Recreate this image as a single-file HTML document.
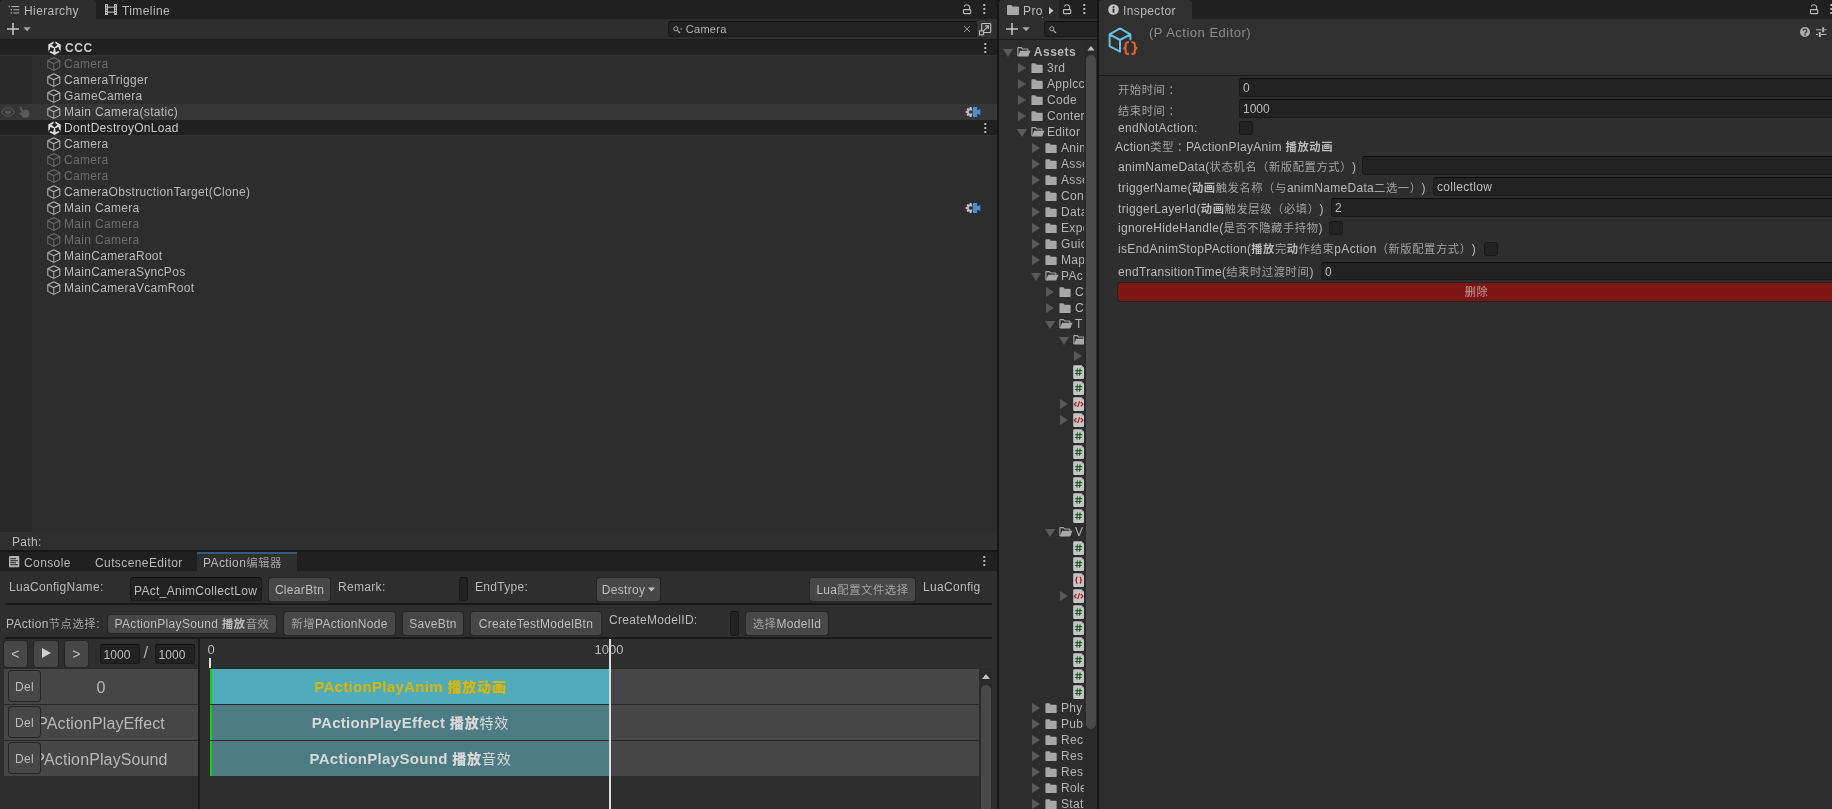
<!DOCTYPE html><html><head><meta charset="utf-8"><title>Unity</title><style>
*{box-sizing:border-box;margin:0;padding:0}
html,body{width:1832px;height:809px;overflow:hidden;background:#171717}
body{position:relative;font-family:"Liberation Sans","Noto Sans CJK SC",sans-serif;font-size:12px;color:#bababa;letter-spacing:.32px;line-height:16px;-webkit-font-smoothing:antialiased}
.a{position:absolute}
.t{position:absolute;white-space:nowrap}
.pane{position:absolute;overflow:hidden;background:#2d2d2d;will-change:transform;border-radius:3px 3px 0 0}
.tabbar{position:absolute;left:0;top:0;right:0;height:19px;background:#202020}
.tab{position:absolute;top:0;height:19px;background:#2e2e2e;border-radius:3px 3px 0 0}
.row{position:absolute;left:0;right:0;height:16px}
.dim{color:#6e6e6e}
.fld{position:absolute;background:#222;border:1px solid #1a1a1a;border-top-color:#0e0e0e;border-radius:3px;color:#bebebe;white-space:nowrap;overflow:hidden}
.btn{position:absolute;background:#474747;box-shadow:0 0 0 1px #262626;border-radius:3px;color:#bebebe;text-align:center;white-space:nowrap;overflow:hidden}
.cb{position:absolute;width:14px;height:14px;background:#222;border:1px solid #181818;border-radius:3px}
.b{font-weight:bold}
.c{color:#a2a2a2;font-size:.942em;letter-spacing:.051em;text-spacing-trim:space-all}
b{font-size:.942em;letter-spacing:.051em}
.nc .c{color:inherit;font-weight:normal}
svg{position:absolute;overflow:visible}
</style></head><body><svg width="0" height="0" style="left:0;top:0"><defs><clipPath id="gc"><rect x="0" y="0" width="7.100" height="10"/></clipPath></defs></svg><div class="pane" style="left:0;top:0;width:997px;height:550px"><div class="tabbar"></div><div class="tab" style="left:0;width:96px"></div><svg style="left:8px;top:5px" width="12" height="10" viewBox="0 0 12 10" fill="#a8a8a8"><rect x=".6" y=".8" width="1.400" height="1.400"/><rect x="3.400" y="1" width="7.800" height="1.100"/><rect x="2.600" y="4" width="1.400" height="1.400"/><rect x="5.400" y="4.200" width="5.800" height="1.100"/><rect x="2.600" y="7.200" width="1.400" height="1.400"/><rect x="5.400" y="7.400" width="5.800" height="1.100"/></svg><div class="t" style="left:24px;top:3px;letter-spacing:.4px">Hierarchy</div><svg style="left:105px;top:4px" width="12" height="11" viewBox="0 0 12 11"><rect x="0" y="0" width="3" height="11" rx=".6" fill="#bcbcbc"/><rect x="9" y="0" width="3" height="11" rx=".6" fill="#bcbcbc"/><rect x="3" y="2.600" width="6" height="1.100" fill="#bcbcbc"/><rect x="3" y="7.600" width="6" height="1.100" fill="#bcbcbc"/><path d="M1.500 1.200v9M10.500 1.200v9" stroke="#2a2a2a" stroke-width=".9" stroke-dasharray="1 1.300"/></svg><div class="t" style="left:122px;top:3px;letter-spacing:.4px">Timeline</div><svg style="left:962px;top:4px" width="10" height="11" viewBox="0 0 10 11" fill="none" stroke="#bcbcbc" stroke-width="1.100"><rect x="1.500" y="5.600" width="7.200" height="4" rx=".6"/><path d="M2.300 2.600A2.700 2.400 0 0 1 7.600 2.700V5.500"/></svg><svg style="left:982.7px;top:4px" width="3" height="11" viewBox="0 0 3 11" fill="#b6b6b6"><rect x=".3" y="0" width="2" height="2"/><rect x=".3" y="4" width="2" height="2"/><rect x=".3" y="8" width="2" height="2"/></svg><div class="a" style="left:0;top:19px;width:997px;height:21px;background:#2e2e2e;border-bottom:1px solid #1c1c1c"></div><svg style="left:7px;top:23px" width="24" height="12" viewBox="0 0 24 12"><path d="M6 0v12M0 6h12" stroke="#c4c4c4" stroke-width="1.6"/><path d="M16.4 4.2h7.4L20.1 8.200z" fill="#a8a8a8"/></svg><div class="fld" style="left:668px;top:21px;width:309px;height:16px;line-height:15px;padding-left:16.700px;font-size:11px;color:#b4b4b4;border-radius:3px 0 0 3px">Camera</div><svg style="left:673px;top:25.500px" width="11" height="8" viewBox="0 0 11 8" fill="none" stroke="#a6a6a6"><circle cx="2.800" cy="2.800" r="2.100" stroke-width="1"/><path d="M4.400 4.400 7 7" stroke-width="1.100"/><path d="M6.800 2.400h2.600L8.100 4z" fill="#a6a6a6" stroke="none"/></svg><svg style="left:964px;top:26px" width="6" height="6" viewBox="0 0 6 6" stroke="#a4a4a4" stroke-width=".9"><path d="M0 0l6 6M6 0l-6 6"/></svg><div class="a" style="left:977px;top:21px;width:16px;height:16px;background:#333;border-radius:0 3px 3px 0"></div><svg style="left:978px;top:22px" width="14" height="14" viewBox="0 0 14 14" fill="none" stroke="#bcbcbc" stroke-width="1.100"><rect x="3.700" y="1.500" width="9" height="9" rx=".8"/><rect x="1.500" y="8.800" width="4" height="4" fill="#333"/><path d="M5.500 8.800 10 4.300M7.200 3.900h3.200v3.200"/></svg><div class="a" style="left:0;top:40px;width:32px;height:492px;background:#272727"></div><div class="row" style="top:40px;background:#202020;height:15px"></div><div class="row" style="top:55px;height:1px;background:#333"></div><svg style="left:47.6px;top:40.7px" width="13" height="14" viewBox="0 0 13 14"><path d="M6.500 0 12.700 3.500v7L6.500 14 .3 10.500v-7z" fill="#dedede"/><path d="M5.650.1h1.700v2.200l2.200 1.400L6.500 6.400 3.450 3.700l2.200-1.400z" fill="#212121"/><g transform="rotate(120 6.500 7)"><path d="M5.650.1h1.700v2.200l2.200 1.400L6.500 6.400 3.450 3.700l2.200-1.400z" fill="#212121"/></g><g transform="rotate(240 6.500 7)"><path d="M5.650.1h1.700v2.200l2.200 1.400L6.500 6.400 3.450 3.700l2.200-1.400z" fill="#212121"/></g></svg><div class="t b" style="left:65px;top:40px;color:#cacaca;letter-spacing:.6px">CCC</div><svg style="left:984px;top:43px" width="3" height="11" viewBox="0 0 3 11" fill="#b6b6b6"><rect x=".3" y="0" width="2" height="2"/><rect x=".3" y="4" width="2" height="2"/><rect x=".3" y="8" width="2" height="2"/></svg><svg style="left:47px;top:57px" width="13.600" height="14.200" viewBox="0 0 14 15" preserveAspectRatio="none" fill="none" stroke="#6c6c6c" stroke-width="1.050" stroke-linejoin="round"><path d="M7 .8 13.200 4v7L7 14.200.8 11V4z"/><path d="M.8 4 7 7.200 13.200 4M7 7.200v7"/></svg><div class="t dim" style="left:64px;top:56px">Camera</div><svg style="left:47px;top:73px" width="13.600" height="14.200" viewBox="0 0 14 15" preserveAspectRatio="none" fill="none" stroke="#b4b4b4" stroke-width="1.050" stroke-linejoin="round"><path d="M7 .8 13.200 4v7L7 14.200.8 11V4z"/><path d="M.8 4 7 7.200 13.200 4M7 7.200v7"/></svg><div class="t" style="left:64px;top:72px">CameraTrigger</div><svg style="left:47px;top:89px" width="13.600" height="14.200" viewBox="0 0 14 15" preserveAspectRatio="none" fill="none" stroke="#b4b4b4" stroke-width="1.050" stroke-linejoin="round"><path d="M7 .8 13.200 4v7L7 14.200.8 11V4z"/><path d="M.8 4 7 7.200 13.200 4M7 7.200v7"/></svg><div class="t" style="left:64px;top:88px">GameCamera</div><div class="row" style="top:104px;background:#363636"></div><svg style="left:1px;top:107px" width="14" height="10" viewBox="0 0 14 10" fill="none" stroke="#555" stroke-width="1.100"><path d="M.6 5C2.200 2 4.500.8 7 .8S11.800 2 13.400 5C11.800 8 9.500 9.200 7 9.200S2.200 8 .6 5z"/><path d="M4.600 4.200A2.400 2.600 0 0 0 9.400 4.200z" fill="#555"/></svg><svg style="left:18px;top:106px" width="12" height="12" viewBox="0 0 12 12" fill="#5a5a5a"><path d="M1.500.8 3 .5 5 4.200 8.500 3.500l2.500 1.200.6 3.600L9.800 11.500H5.200L1.200 7.200l1-.9L4 7.500z"/></svg><svg style="left:965px;top:107px" width="16" height="10" viewBox="0 0 16 10"><g clip-path="url(#gc)"><circle cx="5.600" cy="5" r="3.700" fill="#bcbcbc"/><path d="M8.10 5.00L10.50 5.00M7.37 6.77L9.06 8.46M5.60 7.50L5.60 9.90M3.83 6.77L2.14 8.46M3.10 5.00L0.70 5.00M3.83 3.23L2.14 1.54M5.60 2.50L5.60 0.10M7.37 3.23L9.06 1.54" stroke="#bcbcbc" stroke-width="2"/><circle cx="5.600" cy="5" r="1.800" fill="#363636"/></g><path d="M7.900 0h4.200v3.400l3.200-1.600v6.400l-3.200-1.600V10H7.900z" fill="#4a8fd6"/></svg><svg style="left:47px;top:105px" width="13.600" height="14.200" viewBox="0 0 14 15" preserveAspectRatio="none" fill="none" stroke="#b4b4b4" stroke-width="1.050" stroke-linejoin="round"><path d="M7 .8 13.200 4v7L7 14.200.8 11V4z"/><path d="M.8 4 7 7.200 13.200 4M7 7.200v7"/></svg><div class="t" style="left:64px;top:104px">Main Camera(static)</div><div class="row" style="top:120px;background:#202020;height:15px"></div><div class="row" style="top:135px;height:1px;background:#333"></div><svg style="left:47.6px;top:120.7px" width="13" height="14" viewBox="0 0 13 14"><path d="M6.500 0 12.700 3.500v7L6.500 14 .3 10.500v-7z" fill="#dedede"/><path d="M5.650.1h1.700v2.200l2.200 1.400L6.500 6.400 3.450 3.700l2.200-1.400z" fill="#212121"/><g transform="rotate(120 6.500 7)"><path d="M5.650.1h1.700v2.200l2.200 1.400L6.500 6.400 3.450 3.700l2.200-1.400z" fill="#212121"/></g><g transform="rotate(240 6.500 7)"><path d="M5.650.1h1.700v2.200l2.200 1.400L6.500 6.400 3.450 3.700l2.200-1.400z" fill="#212121"/></g></svg><div class="t" style="left:64px;top:120px;color:#cacaca">DontDestroyOnLoad</div><svg style="left:984px;top:123px" width="3" height="11" viewBox="0 0 3 11" fill="#b6b6b6"><rect x=".3" y="0" width="2" height="2"/><rect x=".3" y="4" width="2" height="2"/><rect x=".3" y="8" width="2" height="2"/></svg><svg style="left:47px;top:137px" width="13.600" height="14.200" viewBox="0 0 14 15" preserveAspectRatio="none" fill="none" stroke="#b4b4b4" stroke-width="1.050" stroke-linejoin="round"><path d="M7 .8 13.200 4v7L7 14.200.8 11V4z"/><path d="M.8 4 7 7.200 13.200 4M7 7.200v7"/></svg><div class="t" style="left:64px;top:136px">Camera</div><svg style="left:47px;top:153px" width="13.600" height="14.200" viewBox="0 0 14 15" preserveAspectRatio="none" fill="none" stroke="#6c6c6c" stroke-width="1.050" stroke-linejoin="round"><path d="M7 .8 13.200 4v7L7 14.200.8 11V4z"/><path d="M.8 4 7 7.200 13.200 4M7 7.200v7"/></svg><div class="t dim" style="left:64px;top:152px">Camera</div><svg style="left:47px;top:169px" width="13.600" height="14.200" viewBox="0 0 14 15" preserveAspectRatio="none" fill="none" stroke="#6c6c6c" stroke-width="1.050" stroke-linejoin="round"><path d="M7 .8 13.200 4v7L7 14.200.8 11V4z"/><path d="M.8 4 7 7.200 13.200 4M7 7.200v7"/></svg><div class="t dim" style="left:64px;top:168px">Camera</div><svg style="left:47px;top:185px" width="13.600" height="14.200" viewBox="0 0 14 15" preserveAspectRatio="none" fill="none" stroke="#b4b4b4" stroke-width="1.050" stroke-linejoin="round"><path d="M7 .8 13.200 4v7L7 14.200.8 11V4z"/><path d="M.8 4 7 7.200 13.200 4M7 7.200v7"/></svg><div class="t" style="left:64px;top:184px">CameraObstructionTarget(Clone)</div><svg style="left:47px;top:201px" width="13.600" height="14.200" viewBox="0 0 14 15" preserveAspectRatio="none" fill="none" stroke="#b4b4b4" stroke-width="1.050" stroke-linejoin="round"><path d="M7 .8 13.200 4v7L7 14.200.8 11V4z"/><path d="M.8 4 7 7.200 13.200 4M7 7.200v7"/></svg><div class="t" style="left:64px;top:200px">Main Camera</div><svg style="left:965px;top:203px" width="16" height="10" viewBox="0 0 16 10"><g clip-path="url(#gc)"><circle cx="5.600" cy="5" r="3.700" fill="#bcbcbc"/><path d="M8.10 5.00L10.50 5.00M7.37 6.77L9.06 8.46M5.60 7.50L5.60 9.90M3.83 6.77L2.14 8.46M3.10 5.00L0.70 5.00M3.83 3.23L2.14 1.54M5.60 2.50L5.60 0.10M7.37 3.23L9.06 1.54" stroke="#bcbcbc" stroke-width="2"/><circle cx="5.600" cy="5" r="1.800" fill="#2d2d2d"/></g><path d="M7.900 0h4.200v3.400l3.200-1.600v6.400l-3.200-1.600V10H7.900z" fill="#4a8fd6"/></svg><svg style="left:47px;top:217px" width="13.600" height="14.200" viewBox="0 0 14 15" preserveAspectRatio="none" fill="none" stroke="#6c6c6c" stroke-width="1.050" stroke-linejoin="round"><path d="M7 .8 13.200 4v7L7 14.200.8 11V4z"/><path d="M.8 4 7 7.200 13.200 4M7 7.200v7"/></svg><div class="t dim" style="left:64px;top:216px">Main Camera</div><svg style="left:47px;top:233px" width="13.600" height="14.200" viewBox="0 0 14 15" preserveAspectRatio="none" fill="none" stroke="#6c6c6c" stroke-width="1.050" stroke-linejoin="round"><path d="M7 .8 13.200 4v7L7 14.200.8 11V4z"/><path d="M.8 4 7 7.200 13.200 4M7 7.200v7"/></svg><div class="t dim" style="left:64px;top:232px">Main Camera</div><svg style="left:47px;top:249px" width="13.600" height="14.200" viewBox="0 0 14 15" preserveAspectRatio="none" fill="none" stroke="#b4b4b4" stroke-width="1.050" stroke-linejoin="round"><path d="M7 .8 13.200 4v7L7 14.200.8 11V4z"/><path d="M.8 4 7 7.200 13.200 4M7 7.200v7"/></svg><div class="t" style="left:64px;top:248px">MainCameraRoot</div><svg style="left:47px;top:265px" width="13.600" height="14.200" viewBox="0 0 14 15" preserveAspectRatio="none" fill="none" stroke="#b4b4b4" stroke-width="1.050" stroke-linejoin="round"><path d="M7 .8 13.200 4v7L7 14.200.8 11V4z"/><path d="M.8 4 7 7.200 13.200 4M7 7.200v7"/></svg><div class="t" style="left:64px;top:264px">MainCameraSyncPos</div><svg style="left:47px;top:281px" width="13.600" height="14.200" viewBox="0 0 14 15" preserveAspectRatio="none" fill="none" stroke="#b4b4b4" stroke-width="1.050" stroke-linejoin="round"><path d="M7 .8 13.200 4v7L7 14.200.8 11V4z"/><path d="M.8 4 7 7.200 13.200 4M7 7.200v7"/></svg><div class="t" style="left:64px;top:280px">MainCameraVcamRoot</div><div class="a" style="left:0;top:532px;width:997px;height:18px;background:#2f2f2f"></div><div class="t" style="left:12px;top:534px">Path:</div></div><div class="pane" style="left:999px;top:0;width:98px;height:809px;background:#2d2d2d"><div class="tabbar"></div><div class="tab" style="left:0;width:44px;border-radius:3px 0 0 0"></div><div class="a" style="left:44px;top:0;width:16px;height:19px;background:#2b2b2b"></div><svg style="left:8px;top:4.500px" width="12" height="10" viewBox="0 0 12 10"><path d="M0 .8A.8.800 0 0 1 .8 0h3.400l1.300 1.600h5.700a.8.800 0 0 1 .8.800v6.800a.8.800 0 0 1-.8.800H.8a.8.800 0 0 1-.8-.8z" fill="#a8a8a8"/></svg><div class="a" style="left:24px;top:3px;width:20px;overflow:hidden;white-space:nowrap;letter-spacing:.4px">Proj</div><svg style="left:50px;top:6.500px" width="4.500" height="7.500" viewBox="0 0 6 9" preserveAspectRatio="none"><path d="M0 0 6 4.500 0 9z" fill="#c8c8c8"/></svg><svg style="left:63px;top:4px" width="10" height="11" viewBox="0 0 10 11" fill="none" stroke="#bcbcbc" stroke-width="1.100"><rect x="1.500" y="5.600" width="7.200" height="4" rx=".6"/><path d="M2.300 2.600A2.700 2.400 0 0 1 7.600 2.700V5.500"/></svg><svg style="left:84px;top:4px" width="3" height="11" viewBox="0 0 3 11" fill="#b6b6b6"><rect x=".3" y="0" width="2" height="2"/><rect x=".3" y="4" width="2" height="2"/><rect x=".3" y="8" width="2" height="2"/></svg><div class="a" style="left:0;top:19px;width:98px;height:21px;background:#2e2e2e;border-bottom:1px solid #1c1c1c"></div><svg style="left:7px;top:23px" width="24" height="12" viewBox="0 0 24 12"><path d="M6 0v12M0 6h12" stroke="#c4c4c4" stroke-width="1.6"/><path d="M16.4 4.2h7.4L20.1 8.200z" fill="#a8a8a8"/></svg><div class="fld" style="left:45px;top:21px;width:60px;height:16px"></div><svg style="left:49.500px;top:25.500px" width="8" height="8" viewBox="0 0 8 8" fill="none" stroke="#a6a6a6"><circle cx="2.800" cy="2.800" r="2.100" stroke-width="1"/><path d="M4.400 4.400 7 7" stroke-width="1.200"/></svg><div class="a" style="left:0;top:40px;width:85px;height:769px;overflow:hidden;color:#b6b6b6"><svg style="left:4px;top:9px" width="10" height="8" viewBox="0 0 10 8"><path d="M0 0h10L5 8z" fill="#5a5a5a"/></svg><svg style="left:17.7px;top:7.3px" width="14" height="9.800" viewBox="0 0 16 12" preserveAspectRatio="none"><path d="M1 11V1.4a.6.6 0 0 1 .6-.6h3.3l1.4 1.7h5.5a.6.6 0 0 1 .6.6v1.6" fill="none" stroke="#a8a8a8" stroke-width="1.300"/><path d="M3.6 4.7h11.8l-2.6 6.9H.9z" fill="#a8a8a8"/></svg><div class="t b" style="left:34.8px;top:4px;letter-spacing:.5px">Assets</div><svg style="left:19px;top:23px" width="8" height="10" viewBox="0 0 8 10"><path d="M0 0 8 5 0 10z" fill="#5a5a5a"/></svg><svg style="left:32px;top:23px" width="12" height="10.300" viewBox="0 0 14 12"><path d="M.5 1.2A1 1 0 0 1 1.5.2h3.6l1.5 1.9h6A1 1 0 0 1 13.6 3v7.8a1 1 0 0 1-1 1H1.5a1 1 0 0 1-1-1z" fill="#a8a8a8"/></svg><div class="t" style="left:48px;top:20px;">3rd</div><svg style="left:19px;top:39px" width="8" height="10" viewBox="0 0 8 10"><path d="M0 0 8 5 0 10z" fill="#5a5a5a"/></svg><svg style="left:32px;top:39px" width="12" height="10.300" viewBox="0 0 14 12"><path d="M.5 1.2A1 1 0 0 1 1.5.2h3.6l1.5 1.9h6A1 1 0 0 1 13.6 3v7.8a1 1 0 0 1-1 1H1.5a1 1 0 0 1-1-1z" fill="#a8a8a8"/></svg><div class="t" style="left:48px;top:36px;">Applcc</div><svg style="left:19px;top:55px" width="8" height="10" viewBox="0 0 8 10"><path d="M0 0 8 5 0 10z" fill="#5a5a5a"/></svg><svg style="left:32px;top:55px" width="12" height="10.300" viewBox="0 0 14 12"><path d="M.5 1.2A1 1 0 0 1 1.5.2h3.6l1.5 1.9h6A1 1 0 0 1 13.6 3v7.8a1 1 0 0 1-1 1H1.5a1 1 0 0 1-1-1z" fill="#a8a8a8"/></svg><div class="t" style="left:48px;top:52px;">Code</div><svg style="left:19px;top:71px" width="8" height="10" viewBox="0 0 8 10"><path d="M0 0 8 5 0 10z" fill="#5a5a5a"/></svg><svg style="left:32px;top:71px" width="12" height="10.300" viewBox="0 0 14 12"><path d="M.5 1.2A1 1 0 0 1 1.5.2h3.6l1.5 1.9h6A1 1 0 0 1 13.6 3v7.8a1 1 0 0 1-1 1H1.5a1 1 0 0 1-1-1z" fill="#a8a8a8"/></svg><div class="t" style="left:48px;top:68px;">Conter</div><svg style="left:18px;top:89px" width="10" height="8" viewBox="0 0 10 8"><path d="M0 0h10L5 8z" fill="#5a5a5a"/></svg><svg style="left:31.7px;top:87.3px" width="14" height="9.800" viewBox="0 0 16 12" preserveAspectRatio="none"><path d="M1 11V1.4a.6.6 0 0 1 .6-.6h3.3l1.4 1.7h5.5a.6.6 0 0 1 .6.6v1.6" fill="none" stroke="#a8a8a8" stroke-width="1.300"/><path d="M3.6 4.7h11.8l-2.6 6.9H.9z" fill="#a8a8a8"/></svg><div class="t" style="left:48px;top:84px;">Editor</div><svg style="left:33px;top:103px" width="8" height="10" viewBox="0 0 8 10"><path d="M0 0 8 5 0 10z" fill="#5a5a5a"/></svg><svg style="left:46px;top:103px" width="12" height="10.300" viewBox="0 0 14 12"><path d="M.5 1.2A1 1 0 0 1 1.5.2h3.6l1.5 1.9h6A1 1 0 0 1 13.6 3v7.8a1 1 0 0 1-1 1H1.5a1 1 0 0 1-1-1z" fill="#a8a8a8"/></svg><div class="t" style="left:62px;top:100px;">Anim</div><svg style="left:33px;top:119px" width="8" height="10" viewBox="0 0 8 10"><path d="M0 0 8 5 0 10z" fill="#5a5a5a"/></svg><svg style="left:46px;top:119px" width="12" height="10.300" viewBox="0 0 14 12"><path d="M.5 1.2A1 1 0 0 1 1.5.2h3.6l1.5 1.9h6A1 1 0 0 1 13.6 3v7.8a1 1 0 0 1-1 1H1.5a1 1 0 0 1-1-1z" fill="#a8a8a8"/></svg><div class="t" style="left:62px;top:116px;">Asse</div><svg style="left:33px;top:135px" width="8" height="10" viewBox="0 0 8 10"><path d="M0 0 8 5 0 10z" fill="#5a5a5a"/></svg><svg style="left:46px;top:135px" width="12" height="10.300" viewBox="0 0 14 12"><path d="M.5 1.2A1 1 0 0 1 1.5.2h3.6l1.5 1.9h6A1 1 0 0 1 13.6 3v7.8a1 1 0 0 1-1 1H1.5a1 1 0 0 1-1-1z" fill="#a8a8a8"/></svg><div class="t" style="left:62px;top:132px;">Asse</div><svg style="left:33px;top:151px" width="8" height="10" viewBox="0 0 8 10"><path d="M0 0 8 5 0 10z" fill="#5a5a5a"/></svg><svg style="left:46px;top:151px" width="12" height="10.300" viewBox="0 0 14 12"><path d="M.5 1.2A1 1 0 0 1 1.5.2h3.6l1.5 1.9h6A1 1 0 0 1 13.6 3v7.8a1 1 0 0 1-1 1H1.5a1 1 0 0 1-1-1z" fill="#a8a8a8"/></svg><div class="t" style="left:62px;top:148px;">Con</div><svg style="left:33px;top:167px" width="8" height="10" viewBox="0 0 8 10"><path d="M0 0 8 5 0 10z" fill="#5a5a5a"/></svg><svg style="left:46px;top:167px" width="12" height="10.300" viewBox="0 0 14 12"><path d="M.5 1.2A1 1 0 0 1 1.5.2h3.6l1.5 1.9h6A1 1 0 0 1 13.6 3v7.8a1 1 0 0 1-1 1H1.5a1 1 0 0 1-1-1z" fill="#a8a8a8"/></svg><div class="t" style="left:62px;top:164px;">Data</div><svg style="left:33px;top:183px" width="8" height="10" viewBox="0 0 8 10"><path d="M0 0 8 5 0 10z" fill="#5a5a5a"/></svg><svg style="left:46px;top:183px" width="12" height="10.300" viewBox="0 0 14 12"><path d="M.5 1.2A1 1 0 0 1 1.5.2h3.6l1.5 1.9h6A1 1 0 0 1 13.6 3v7.8a1 1 0 0 1-1 1H1.5a1 1 0 0 1-1-1z" fill="#a8a8a8"/></svg><div class="t" style="left:62px;top:180px;">Expe</div><svg style="left:33px;top:199px" width="8" height="10" viewBox="0 0 8 10"><path d="M0 0 8 5 0 10z" fill="#5a5a5a"/></svg><svg style="left:46px;top:199px" width="12" height="10.300" viewBox="0 0 14 12"><path d="M.5 1.2A1 1 0 0 1 1.5.2h3.6l1.5 1.9h6A1 1 0 0 1 13.6 3v7.8a1 1 0 0 1-1 1H1.5a1 1 0 0 1-1-1z" fill="#a8a8a8"/></svg><div class="t" style="left:62px;top:196px;">Guic</div><svg style="left:33px;top:215px" width="8" height="10" viewBox="0 0 8 10"><path d="M0 0 8 5 0 10z" fill="#5a5a5a"/></svg><svg style="left:46px;top:215px" width="12" height="10.300" viewBox="0 0 14 12"><path d="M.5 1.2A1 1 0 0 1 1.5.2h3.6l1.5 1.9h6A1 1 0 0 1 13.6 3v7.8a1 1 0 0 1-1 1H1.5a1 1 0 0 1-1-1z" fill="#a8a8a8"/></svg><div class="t" style="left:62px;top:212px;">Map</div><svg style="left:32px;top:233px" width="10" height="8" viewBox="0 0 10 8"><path d="M0 0h10L5 8z" fill="#5a5a5a"/></svg><svg style="left:45.7px;top:231.3px" width="14" height="9.800" viewBox="0 0 16 12" preserveAspectRatio="none"><path d="M1 11V1.4a.6.6 0 0 1 .6-.6h3.3l1.4 1.7h5.5a.6.6 0 0 1 .6.6v1.6" fill="none" stroke="#a8a8a8" stroke-width="1.300"/><path d="M3.6 4.7h11.8l-2.6 6.9H.9z" fill="#a8a8a8"/></svg><div class="t" style="left:62px;top:228px;">PAc</div><svg style="left:47px;top:247px" width="8" height="10" viewBox="0 0 8 10"><path d="M0 0 8 5 0 10z" fill="#5a5a5a"/></svg><svg style="left:60px;top:247px" width="12" height="10.300" viewBox="0 0 14 12"><path d="M.5 1.2A1 1 0 0 1 1.5.2h3.6l1.5 1.9h6A1 1 0 0 1 13.6 3v7.8a1 1 0 0 1-1 1H1.5a1 1 0 0 1-1-1z" fill="#a8a8a8"/></svg><div class="t" style="left:76px;top:244px;">C</div><svg style="left:47px;top:263px" width="8" height="10" viewBox="0 0 8 10"><path d="M0 0 8 5 0 10z" fill="#5a5a5a"/></svg><svg style="left:60px;top:263px" width="12" height="10.300" viewBox="0 0 14 12"><path d="M.5 1.2A1 1 0 0 1 1.5.2h3.6l1.5 1.9h6A1 1 0 0 1 13.6 3v7.8a1 1 0 0 1-1 1H1.5a1 1 0 0 1-1-1z" fill="#a8a8a8"/></svg><div class="t" style="left:76px;top:260px;">C</div><svg style="left:46px;top:281px" width="10" height="8" viewBox="0 0 10 8"><path d="M0 0h10L5 8z" fill="#5a5a5a"/></svg><svg style="left:59.7px;top:279.3px" width="14" height="9.800" viewBox="0 0 16 12" preserveAspectRatio="none"><path d="M1 11V1.4a.6.6 0 0 1 .6-.6h3.3l1.4 1.7h5.5a.6.6 0 0 1 .6.6v1.6" fill="none" stroke="#a8a8a8" stroke-width="1.300"/><path d="M3.6 4.7h11.8l-2.6 6.9H.9z" fill="#a8a8a8"/></svg><div class="t" style="left:76px;top:276px;">T</div><svg style="left:60px;top:297px" width="10" height="8" viewBox="0 0 10 8"><path d="M0 0h10L5 8z" fill="#5a5a5a"/></svg><svg style="left:73.7px;top:295.3px" width="14" height="9.800" viewBox="0 0 16 12" preserveAspectRatio="none"><path d="M1 11V1.4a.6.6 0 0 1 .6-.6h3.3l1.4 1.7h5.5a.6.6 0 0 1 .6.6v1.6" fill="none" stroke="#a8a8a8" stroke-width="1.300"/><path d="M3.6 4.7h11.8l-2.6 6.9H.9z" fill="#a8a8a8"/></svg><div class="t" style="left:90px;top:292px;"></div><svg style="left:75px;top:311px" width="8" height="10" viewBox="0 0 8 10"><path d="M0 0 8 5 0 10z" fill="#5a5a5a"/></svg><svg style="left:74px;top:325px" width="11.200" height="14.300" viewBox="0.300 0 11.400 14" preserveAspectRatio="none"><path d="M.5 1.2a1 1 0 0 1 1-1h7.400L11.500 2.800v10a1 1 0 0 1-1 1h-9a1 1 0 0 1-1-1z" fill="#c6c6c6"/><path d="M8.900.2v2.600h2.600z" fill="#a2a2a2"/><path d="M4.900 3.400 4.300 10.400M7.500 3.400 6.900 10.400M2.600 5.500h7M2.300 8.300h7" stroke="#1b5e24" stroke-width="1.150" fill="none"/></svg><svg style="left:74px;top:341px" width="11.200" height="14.300" viewBox="0.300 0 11.400 14" preserveAspectRatio="none"><path d="M.5 1.2a1 1 0 0 1 1-1h7.400L11.500 2.800v10a1 1 0 0 1-1 1h-9a1 1 0 0 1-1-1z" fill="#c6c6c6"/><path d="M8.900.2v2.600h2.600z" fill="#a2a2a2"/><path d="M4.900 3.400 4.300 10.400M7.500 3.400 6.900 10.400M2.600 5.500h7M2.300 8.300h7" stroke="#1b5e24" stroke-width="1.150" fill="none"/></svg><svg style="left:61px;top:359px" width="8" height="10" viewBox="0 0 8 10"><path d="M0 0 8 5 0 10z" fill="#5a5a5a"/></svg><svg style="left:74px;top:357px" width="11.200" height="14.300" viewBox="0.300 0 11.400 14" preserveAspectRatio="none"><path d="M.5 1.2a1 1 0 0 1 1-1h7.400L11.500 2.800v10a1 1 0 0 1-1 1h-9a1 1 0 0 1-1-1z" fill="#c6c6c6"/><path d="M8.900.2v2.600h2.600z" fill="#a2a2a2"/><path d="M3.700 4.900 1.600 7l2.100 2.100M8.300 4.900 10.400 7l-2.100 2.100M6.900 4.200 5.100 9.800" stroke="#a01616" stroke-width="1.150" fill="none"/></svg><svg style="left:61px;top:375px" width="8" height="10" viewBox="0 0 8 10"><path d="M0 0 8 5 0 10z" fill="#5a5a5a"/></svg><svg style="left:74px;top:373px" width="11.200" height="14.300" viewBox="0.300 0 11.400 14" preserveAspectRatio="none"><path d="M.5 1.2a1 1 0 0 1 1-1h7.400L11.500 2.800v10a1 1 0 0 1-1 1h-9a1 1 0 0 1-1-1z" fill="#c6c6c6"/><path d="M8.900.2v2.600h2.600z" fill="#a2a2a2"/><path d="M3.700 4.900 1.600 7l2.100 2.100M8.300 4.900 10.400 7l-2.100 2.100M6.900 4.200 5.100 9.800" stroke="#a01616" stroke-width="1.150" fill="none"/></svg><svg style="left:74px;top:389px" width="11.200" height="14.300" viewBox="0.300 0 11.400 14" preserveAspectRatio="none"><path d="M.5 1.2a1 1 0 0 1 1-1h7.400L11.500 2.800v10a1 1 0 0 1-1 1h-9a1 1 0 0 1-1-1z" fill="#c6c6c6"/><path d="M8.900.2v2.600h2.600z" fill="#a2a2a2"/><path d="M4.900 3.400 4.300 10.400M7.500 3.400 6.900 10.400M2.600 5.500h7M2.300 8.300h7" stroke="#1b5e24" stroke-width="1.150" fill="none"/></svg><svg style="left:74px;top:405px" width="11.200" height="14.300" viewBox="0.300 0 11.400 14" preserveAspectRatio="none"><path d="M.5 1.2a1 1 0 0 1 1-1h7.400L11.500 2.800v10a1 1 0 0 1-1 1h-9a1 1 0 0 1-1-1z" fill="#c6c6c6"/><path d="M8.900.2v2.600h2.600z" fill="#a2a2a2"/><path d="M4.900 3.400 4.300 10.400M7.500 3.400 6.900 10.400M2.600 5.500h7M2.300 8.300h7" stroke="#1b5e24" stroke-width="1.150" fill="none"/></svg><svg style="left:74px;top:421px" width="11.200" height="14.300" viewBox="0.300 0 11.400 14" preserveAspectRatio="none"><path d="M.5 1.2a1 1 0 0 1 1-1h7.400L11.500 2.800v10a1 1 0 0 1-1 1h-9a1 1 0 0 1-1-1z" fill="#c6c6c6"/><path d="M8.900.2v2.600h2.600z" fill="#a2a2a2"/><path d="M4.900 3.400 4.300 10.400M7.500 3.400 6.900 10.400M2.600 5.500h7M2.300 8.300h7" stroke="#1b5e24" stroke-width="1.150" fill="none"/></svg><svg style="left:74px;top:437px" width="11.200" height="14.300" viewBox="0.300 0 11.400 14" preserveAspectRatio="none"><path d="M.5 1.2a1 1 0 0 1 1-1h7.400L11.500 2.800v10a1 1 0 0 1-1 1h-9a1 1 0 0 1-1-1z" fill="#c6c6c6"/><path d="M8.900.2v2.600h2.600z" fill="#a2a2a2"/><path d="M4.900 3.400 4.300 10.400M7.500 3.400 6.900 10.400M2.600 5.500h7M2.300 8.300h7" stroke="#1b5e24" stroke-width="1.150" fill="none"/></svg><svg style="left:74px;top:453px" width="11.200" height="14.300" viewBox="0.300 0 11.400 14" preserveAspectRatio="none"><path d="M.5 1.2a1 1 0 0 1 1-1h7.400L11.500 2.800v10a1 1 0 0 1-1 1h-9a1 1 0 0 1-1-1z" fill="#c6c6c6"/><path d="M8.900.2v2.600h2.600z" fill="#a2a2a2"/><path d="M4.900 3.400 4.300 10.400M7.500 3.400 6.900 10.400M2.600 5.500h7M2.300 8.300h7" stroke="#1b5e24" stroke-width="1.150" fill="none"/></svg><svg style="left:74px;top:469px" width="11.200" height="14.300" viewBox="0.300 0 11.400 14" preserveAspectRatio="none"><path d="M.5 1.2a1 1 0 0 1 1-1h7.400L11.500 2.800v10a1 1 0 0 1-1 1h-9a1 1 0 0 1-1-1z" fill="#c6c6c6"/><path d="M8.900.2v2.600h2.600z" fill="#a2a2a2"/><path d="M4.900 3.400 4.300 10.400M7.500 3.400 6.900 10.400M2.600 5.500h7M2.300 8.300h7" stroke="#1b5e24" stroke-width="1.150" fill="none"/></svg><svg style="left:46px;top:489px" width="10" height="8" viewBox="0 0 10 8"><path d="M0 0h10L5 8z" fill="#5a5a5a"/></svg><svg style="left:59.7px;top:487.3px" width="14" height="9.800" viewBox="0 0 16 12" preserveAspectRatio="none"><path d="M1 11V1.4a.6.6 0 0 1 .6-.6h3.3l1.4 1.7h5.5a.6.6 0 0 1 .6.6v1.6" fill="none" stroke="#a8a8a8" stroke-width="1.300"/><path d="M3.6 4.7h11.8l-2.6 6.9H.9z" fill="#a8a8a8"/></svg><div class="t" style="left:76px;top:484px;">V</div><svg style="left:74px;top:501px" width="11.200" height="14.300" viewBox="0.300 0 11.400 14" preserveAspectRatio="none"><path d="M.5 1.2a1 1 0 0 1 1-1h7.400L11.500 2.800v10a1 1 0 0 1-1 1h-9a1 1 0 0 1-1-1z" fill="#c6c6c6"/><path d="M8.900.2v2.600h2.600z" fill="#a2a2a2"/><path d="M4.900 3.400 4.300 10.400M7.500 3.400 6.900 10.400M2.600 5.500h7M2.300 8.300h7" stroke="#1b5e24" stroke-width="1.150" fill="none"/></svg><svg style="left:74px;top:517px" width="11.200" height="14.300" viewBox="0.300 0 11.400 14" preserveAspectRatio="none"><path d="M.5 1.2a1 1 0 0 1 1-1h7.400L11.500 2.800v10a1 1 0 0 1-1 1h-9a1 1 0 0 1-1-1z" fill="#c6c6c6"/><path d="M8.900.2v2.600h2.600z" fill="#a2a2a2"/><path d="M4.900 3.400 4.300 10.400M7.500 3.400 6.900 10.400M2.600 5.500h7M2.300 8.300h7" stroke="#1b5e24" stroke-width="1.150" fill="none"/></svg><svg style="left:74px;top:533px" width="11.200" height="14.300" viewBox="0.300 0 11.400 14" preserveAspectRatio="none"><path d="M.5 1.2a1 1 0 0 1 1-1h7.400L11.500 2.800v10a1 1 0 0 1-1 1h-9a1 1 0 0 1-1-1z" fill="#c6c6c6"/><path d="M8.900.2v2.600h2.600z" fill="#a2a2a2"/><path d="M4.900 4c-1.300 0-1.100 1-1.100 1.800S3.500 7 2.700 7c.8 0 1.100.4 1.100 1.200S3.600 10 4.900 10M7.100 4c1.300 0 1.100 1 1.100 1.800S8.500 7 9.300 7c-.8 0-1.100.4-1.100 1.200S8.400 10 7.100 10" stroke="#b01010" stroke-width="1.200" fill="none"/></svg><svg style="left:61px;top:551px" width="8" height="10" viewBox="0 0 8 10"><path d="M0 0 8 5 0 10z" fill="#5a5a5a"/></svg><svg style="left:74px;top:549px" width="11.200" height="14.300" viewBox="0.300 0 11.400 14" preserveAspectRatio="none"><path d="M.5 1.2a1 1 0 0 1 1-1h7.400L11.500 2.800v10a1 1 0 0 1-1 1h-9a1 1 0 0 1-1-1z" fill="#c6c6c6"/><path d="M8.900.2v2.600h2.600z" fill="#a2a2a2"/><path d="M3.700 4.900 1.600 7l2.100 2.100M8.300 4.900 10.400 7l-2.100 2.100M6.900 4.200 5.100 9.800" stroke="#a01616" stroke-width="1.150" fill="none"/></svg><svg style="left:74px;top:565px" width="11.200" height="14.300" viewBox="0.300 0 11.400 14" preserveAspectRatio="none"><path d="M.5 1.2a1 1 0 0 1 1-1h7.400L11.500 2.800v10a1 1 0 0 1-1 1h-9a1 1 0 0 1-1-1z" fill="#c6c6c6"/><path d="M8.900.2v2.600h2.600z" fill="#a2a2a2"/><path d="M4.900 3.400 4.300 10.400M7.500 3.400 6.900 10.400M2.600 5.500h7M2.300 8.300h7" stroke="#1b5e24" stroke-width="1.150" fill="none"/></svg><svg style="left:74px;top:581px" width="11.200" height="14.300" viewBox="0.300 0 11.400 14" preserveAspectRatio="none"><path d="M.5 1.2a1 1 0 0 1 1-1h7.400L11.500 2.800v10a1 1 0 0 1-1 1h-9a1 1 0 0 1-1-1z" fill="#c6c6c6"/><path d="M8.900.2v2.600h2.600z" fill="#a2a2a2"/><path d="M4.900 3.400 4.300 10.400M7.500 3.400 6.900 10.400M2.600 5.500h7M2.300 8.300h7" stroke="#1b5e24" stroke-width="1.150" fill="none"/></svg><svg style="left:74px;top:597px" width="11.200" height="14.300" viewBox="0.300 0 11.400 14" preserveAspectRatio="none"><path d="M.5 1.2a1 1 0 0 1 1-1h7.400L11.500 2.800v10a1 1 0 0 1-1 1h-9a1 1 0 0 1-1-1z" fill="#c6c6c6"/><path d="M8.900.2v2.600h2.600z" fill="#a2a2a2"/><path d="M4.900 3.400 4.300 10.400M7.500 3.400 6.900 10.400M2.600 5.500h7M2.300 8.300h7" stroke="#1b5e24" stroke-width="1.150" fill="none"/></svg><svg style="left:74px;top:613px" width="11.200" height="14.300" viewBox="0.300 0 11.400 14" preserveAspectRatio="none"><path d="M.5 1.2a1 1 0 0 1 1-1h7.400L11.500 2.800v10a1 1 0 0 1-1 1h-9a1 1 0 0 1-1-1z" fill="#c6c6c6"/><path d="M8.900.2v2.600h2.600z" fill="#a2a2a2"/><path d="M4.900 3.400 4.300 10.400M7.500 3.400 6.900 10.400M2.600 5.500h7M2.300 8.300h7" stroke="#1b5e24" stroke-width="1.150" fill="none"/></svg><svg style="left:74px;top:629px" width="11.200" height="14.300" viewBox="0.300 0 11.400 14" preserveAspectRatio="none"><path d="M.5 1.2a1 1 0 0 1 1-1h7.400L11.500 2.800v10a1 1 0 0 1-1 1h-9a1 1 0 0 1-1-1z" fill="#c6c6c6"/><path d="M8.900.2v2.600h2.600z" fill="#a2a2a2"/><path d="M4.900 3.400 4.300 10.400M7.500 3.400 6.900 10.400M2.600 5.500h7M2.300 8.300h7" stroke="#1b5e24" stroke-width="1.150" fill="none"/></svg><svg style="left:74px;top:645px" width="11.200" height="14.300" viewBox="0.300 0 11.400 14" preserveAspectRatio="none"><path d="M.5 1.2a1 1 0 0 1 1-1h7.400L11.500 2.800v10a1 1 0 0 1-1 1h-9a1 1 0 0 1-1-1z" fill="#c6c6c6"/><path d="M8.900.2v2.600h2.600z" fill="#a2a2a2"/><path d="M4.900 3.400 4.300 10.400M7.500 3.400 6.900 10.400M2.600 5.500h7M2.300 8.300h7" stroke="#1b5e24" stroke-width="1.150" fill="none"/></svg><svg style="left:33px;top:663px" width="8" height="10" viewBox="0 0 8 10"><path d="M0 0 8 5 0 10z" fill="#5a5a5a"/></svg><svg style="left:46px;top:663px" width="12" height="10.300" viewBox="0 0 14 12"><path d="M.5 1.2A1 1 0 0 1 1.5.2h3.6l1.5 1.9h6A1 1 0 0 1 13.6 3v7.8a1 1 0 0 1-1 1H1.5a1 1 0 0 1-1-1z" fill="#a8a8a8"/></svg><div class="t" style="left:62px;top:660px;">Phy</div><svg style="left:33px;top:679px" width="8" height="10" viewBox="0 0 8 10"><path d="M0 0 8 5 0 10z" fill="#5a5a5a"/></svg><svg style="left:46px;top:679px" width="12" height="10.300" viewBox="0 0 14 12"><path d="M.5 1.2A1 1 0 0 1 1.5.2h3.6l1.5 1.9h6A1 1 0 0 1 13.6 3v7.8a1 1 0 0 1-1 1H1.5a1 1 0 0 1-1-1z" fill="#a8a8a8"/></svg><div class="t" style="left:62px;top:676px;">Pub</div><svg style="left:33px;top:695px" width="8" height="10" viewBox="0 0 8 10"><path d="M0 0 8 5 0 10z" fill="#5a5a5a"/></svg><svg style="left:46px;top:695px" width="12" height="10.300" viewBox="0 0 14 12"><path d="M.5 1.2A1 1 0 0 1 1.5.2h3.6l1.5 1.9h6A1 1 0 0 1 13.6 3v7.8a1 1 0 0 1-1 1H1.5a1 1 0 0 1-1-1z" fill="#a8a8a8"/></svg><div class="t" style="left:62px;top:692px;">Rec</div><svg style="left:33px;top:711px" width="8" height="10" viewBox="0 0 8 10"><path d="M0 0 8 5 0 10z" fill="#5a5a5a"/></svg><svg style="left:46px;top:711px" width="12" height="10.300" viewBox="0 0 14 12"><path d="M.5 1.2A1 1 0 0 1 1.5.2h3.6l1.5 1.9h6A1 1 0 0 1 13.6 3v7.8a1 1 0 0 1-1 1H1.5a1 1 0 0 1-1-1z" fill="#a8a8a8"/></svg><div class="t" style="left:62px;top:708px;">Res</div><svg style="left:33px;top:727px" width="8" height="10" viewBox="0 0 8 10"><path d="M0 0 8 5 0 10z" fill="#5a5a5a"/></svg><svg style="left:46px;top:727px" width="12" height="10.300" viewBox="0 0 14 12"><path d="M.5 1.2A1 1 0 0 1 1.5.2h3.6l1.5 1.9h6A1 1 0 0 1 13.6 3v7.8a1 1 0 0 1-1 1H1.5a1 1 0 0 1-1-1z" fill="#a8a8a8"/></svg><div class="t" style="left:62px;top:724px;">Res</div><svg style="left:33px;top:743px" width="8" height="10" viewBox="0 0 8 10"><path d="M0 0 8 5 0 10z" fill="#5a5a5a"/></svg><svg style="left:46px;top:743px" width="12" height="10.300" viewBox="0 0 14 12"><path d="M.5 1.2A1 1 0 0 1 1.5.2h3.6l1.5 1.9h6A1 1 0 0 1 13.6 3v7.8a1 1 0 0 1-1 1H1.5a1 1 0 0 1-1-1z" fill="#a8a8a8"/></svg><div class="t" style="left:62px;top:740px;">Role</div><svg style="left:33px;top:759px" width="8" height="10" viewBox="0 0 8 10"><path d="M0 0 8 5 0 10z" fill="#5a5a5a"/></svg><svg style="left:46px;top:759px" width="12" height="10.300" viewBox="0 0 14 12"><path d="M.5 1.2A1 1 0 0 1 1.5.2h3.6l1.5 1.9h6A1 1 0 0 1 13.6 3v7.8a1 1 0 0 1-1 1H1.5a1 1 0 0 1-1-1z" fill="#a8a8a8"/></svg><div class="t" style="left:62px;top:756px;">Stat</div></div><div class="a" style="left:85px;top:40px;width:13px;height:769px;background:#2a2a2a"></div><svg style="left:88px;top:45.500px" width="8" height="4.500" viewBox="0 0 8 5"><path d="M0 5 4 0l4 5z" fill="#c0c0c0"/></svg><div class="a" style="left:87px;top:55px;width:10px;height:674px;background:#4a4a4a;border-radius:5px"></div></div><div class="pane" style="left:1099px;top:0;width:740px;height:809px;background:#2e2e2e"><div class="tabbar"></div><div class="tab" style="left:0;width:93px;background:#303030"></div><svg style="left:9px;top:4px" width="11" height="11" viewBox="0 0 11 11"><circle cx="5.500" cy="5.500" r="5.300" fill="#c4c4c4"/><rect x="4.600" y="4.600" width="1.800" height="4" fill="#2e2e2e"/><rect x="4.600" y="2.200" width="1.800" height="1.600" fill="#2e2e2e"/></svg><div class="t" style="left:24px;top:3px;letter-spacing:.4px">Inspector</div><svg style="left:710px;top:4px" width="10" height="11" viewBox="0 0 10 11" fill="none" stroke="#bcbcbc" stroke-width="1.100"><rect x="1.500" y="5.600" width="7.200" height="4" rx=".6"/><path d="M2.300 2.600A2.700 2.400 0 0 1 7.600 2.700V5.500"/></svg><svg style="left:731.3px;top:4px" width="3" height="11" viewBox="0 0 3 11" fill="#b6b6b6"><rect x=".3" y="0" width="2" height="2"/><rect x=".3" y="4" width="2" height="2"/><rect x=".3" y="8" width="2" height="2"/></svg><div class="a" style="left:0;top:19px;width:740px;height:57px;background:#303030;border-bottom:1px solid #1a1a1a"></div><svg style="left:9px;top:27px" width="30" height="29" viewBox="0 0 30 29" fill="none"><path d="M22.400 12.500V7.400L12 1.400 1.600 7.400v11.800L12 24.600V13L1.600 7.400M12 13l10.400-5.600" stroke="#68bde3" stroke-width="2" stroke-linejoin="round" stroke-linecap="round"/><path d="M21 15.300h-1.300a2 2 0 0 0-2 2v2q0 1.800-2.400 1.800 2.400 0 2.400 1.800v2a2 2 0 0 0 2 2H21M23.500 15.300h1.300a2 2 0 0 1 2 2v2q0 1.800 2.400 1.800-2.400 0-2.400 1.800v2a2 2 0 0 1-2 2h-1.300" stroke="#303030" stroke-width="4.500"/><path d="M21 15.300h-1.300a2 2 0 0 0-2 2v2q0 1.800-2.400 1.800 2.400 0 2.400 1.800v2a2 2 0 0 0 2 2H21M23.500 15.300h1.300a2 2 0 0 1 2 2v2q0 1.800 2.400 1.800-2.400 0-2.400 1.800v2a2 2 0 0 1-2 2h-1.300" stroke="#e6602c" stroke-width="2.100"/></svg><div class="t" style="left:50px;top:25px;font-size:13px;letter-spacing:.5px;color:#8c8c8c">(P Action Editor)</div><svg style="left:701px;top:27px" width="10" height="10" viewBox="0 0 10 10"><circle cx="5" cy="5" r="5" fill="#adadad"/><path d="M3.300 3.800a1.700 1.700 0 1 1 2.600 1.400c-.6.400-.9.600-.9 1.300" stroke="#303030" stroke-width="1.300" fill="none"/><rect x="4.300" y="7.200" width="1.400" height="1.300" fill="#303030"/></svg><svg style="left:716.500px;top:27px" width="11" height="10" viewBox="0 0 11 10" stroke="#b4b4b4" fill="none"><path d="M0 2.800h5.500M8.500 2.800H10.500M0 7.500h2M4.500 7.500H10.500" stroke-width="1.100"/><path d="M7.200.3v5M3.800 5v5" stroke-width="2"/></svg><div class="t" style="left:19px;top:81.5px;color:#9a9a9a"><span class="c">开始时间</span><span style="position:relative;left:3px"><span class="c">：</span></span></div><div class="fld" style="left:140px;top:78px;width:606px;height:19px;line-height:19px;padding-left:3px">0</div><div class="t" style="left:19px;top:102.5px;color:#9a9a9a"><span class="c">结束时间</span><span style="position:relative;left:3px"><span class="c">：</span></span></div><div class="fld" style="left:140px;top:99px;width:606px;height:19px;line-height:19px;padding-left:3px"><span style="letter-spacing:0">1000</span></div><div class="t" style="left:19px;top:120px;">endNotAction:</div><div class="cb" style="left:140px;top:121px"></div><div class="t" style="left:16px;top:139px;">Action<span class="c">类型</span><span style="position:relative;left:3px"><span class="c">：</span></span>PActionPlayAnim <b>播放动画</b></div><div class="t" style="left:19px;top:159px;">animNameData(<span class="c">状态机名（新版配置方式）</span>)</div><div class="fld" style="left:263px;top:156px;width:483px;height:19px;line-height:19px;padding-left:3px"></div><div class="t" style="left:19px;top:180px;">triggerName(<b>动画</b><span class="c">触发名称（与</span>animNameData<span class="c">二选一）</span>)</div><div class="fld" style="left:334px;top:177px;width:412px;height:19px;line-height:19px;padding-left:3px">collectlow</div><div class="t" style="left:19px;top:201px;">triggerLayerId(<b>动画</b><span class="c">触发层级（必填）</span>)</div><div class="fld" style="left:232px;top:198px;width:514px;height:19px;line-height:19px;padding-left:3px">2</div><div class="t" style="left:19px;top:220px;">ignoreHideHandle(<span class="c">是否不隐藏手持物</span>)</div><div class="cb" style="left:230px;top:221px"></div><div class="t" style="left:19px;top:241px;">isEndAnimStopPAction(<b>播放</b><span class="c">完</span><b>动</b><span class="c">作结束</span>pAction<span class="c">（新版配置方式）</span>)</div><div class="cb" style="left:385px;top:242px"></div><div class="t" style="left:19px;top:264px;">endTransitionTime(<span class="c">结束时过渡时间</span>)</div><div class="fld" style="left:222px;top:262px;width:524px;height:18px;line-height:18px;padding-left:3px">0</div><div class="a nc" style="left:19px;top:283px;width:717px;height:18px;background:#7e1616;box-shadow:0 0 0 1px #222;border-radius:3px;text-align:center;line-height:19px;color:#c49c9c"><span class="c">删除</span></div></div><div class="pane" style="left:0;top:552px;width:997px;height:257px;background:#2e2e2e"><div class="tabbar"></div><div class="tab" style="left:197px;width:100px;border-top:2px solid #2c5d87;border-radius:0"></div><svg style="left:9px;top:4px" width="10.300" height="11.200" viewBox="0 0 10.300 11.200"><rect x="0" y="0" width="10.300" height="11.200" rx=".8" fill="#b4b4b4"/><path d="M1.400 2.700h5.600M1.400 4.700h7.500M1.400 6.700h5.600M1.400 8.700h7.500" stroke="#222" stroke-width="1"/></svg><div class="t" style="left:24px;top:3px;letter-spacing:.4px">Console</div><div class="t" style="left:95px;top:3px;letter-spacing:.4px">CutsceneEditor</div><div class="t" style="left:203px;top:3px;letter-spacing:.4px">PAction<span class="c">编辑器</span></div><svg style="left:983px;top:4px" width="3" height="11" viewBox="0 0 3 11" fill="#b6b6b6"><rect x=".3" y="0" width="2" height="2"/><rect x=".3" y="4" width="2" height="2"/><rect x=".3" y="8" width="2" height="2"/></svg><div class="t" style="left:9px;top:27px">LuaConfigName:</div><div class="fld" style="left:130px;top:25px;width:132px;height:24px;line-height:26px;padding-left:3px">PAct_AnimCollectLow</div><div class="btn" style="left:269px;top:26px;width:61px;height:23px;line-height:24px;">ClearBtn</div><div class="t" style="left:338px;top:27px">Remark:</div><div class="fld" style="left:459px;top:25px;width:9px;height:24px"></div><div class="t" style="left:475px;top:27px">EndType:</div><div class="btn" style="left:597px;top:26px;width:63px;height:23px;line-height:24px;">Destroy<svg style="position:static;display:inline-block;margin-left:3px;margin-bottom:2px" width="7" height="5" viewBox="0 0 7 5"><path d="M0 .5h7L3.500 4.500z" fill="#c4c4c4"/></svg></div><div class="btn" style="left:810px;top:26px;width:105px;height:23px;line-height:24px;">Lua<span class="c">配置文件选择</span></div><div class="t" style="left:923px;top:27px">LuaConfig</div><div class="a" style="left:5px;top:51px;width:987px;height:2px;background:#191919"></div><div class="t" style="left:6px;top:64px">PAction<span class="c">节点选择</span>:</div><div class="btn" style="left:108px;top:63px;width:168px;height:18px;line-height:19px;">PActionPlaySound <b>播放</b><span class="c">音效</span></div><div class="btn" style="left:284px;top:60px;width:111px;height:23px;line-height:24px;"><span class="c">新增</span>PActionNode</div><div class="btn" style="left:403px;top:60px;width:60px;height:23px;line-height:24px;">SaveBtn</div><div class="btn" style="left:471px;top:60px;width:130px;height:23px;line-height:24px;">CreateTestModelBtn</div><div class="t" style="left:609px;top:60px">CreateModelID:</div><div class="fld" style="left:730px;top:59px;width:9px;height:25px"></div><div class="btn" style="left:746px;top:60px;width:82px;height:23px;line-height:24px;"><span class="c">选择</span>ModelId</div><div class="a" style="left:5px;top:85px;width:987px;height:2px;background:#191919"></div><div class="btn" style="left:4px;top:89px;width:23px;height:26px;line-height:27px;font-size:14px">&lt;</div><div class="btn" style="left:34px;top:89px;width:24px;height:26px;line-height:27px;"><svg style="position:static;display:inline-block" width="9" height="10" viewBox="0 0 9 10"><path d="M0 0 9 5 0 10z" fill="#d0d0d0"/></svg></div><div class="btn" style="left:65px;top:89px;width:23px;height:26px;line-height:27px;font-size:14px">&gt;</div><div class="fld" style="left:100px;top:92px;width:40px;height:20px;line-height:20px;padding-left:2.500px;letter-spacing:.1px">1000</div><div class="t" style="left:143.500px;top:93px;font-size:17px;color:#a8a8a8">/</div><div class="fld" style="left:155px;top:92px;width:40px;height:20px;line-height:20px;padding-left:2.500px;letter-spacing:.1px">1000</div><div class="a" style="left:198px;top:87px;width:2px;height:200px;background:#1c1c1c"></div><div class="t" style="left:207.500px;top:90px;font-size:13px;letter-spacing:0">0</div><div class="a" style="left:209px;top:106px;width:2px;height:10px;background:#e0e0e0"></div><div class="t" style="left:594.500px;top:90px;font-size:13px;letter-spacing:0">1000</div><div class="a" style="left:4px;top:116px;width:194px;height:36px;background:#464646;border-top:1px solid #2a2a2a"></div><div class="t" style="left:4px;top:116px;width:194px;height:36px;line-height:39px;text-align:center;font-size:16px;letter-spacing:.12px;color:#b8b8b8">0</div><div class="btn" style="left:9px;top:119px;width:31px;height:30px;line-height:33px;color:#bcbcbc">Del</div><div class="a" style="left:210px;top:116px;width:769px;height:36px;background:#464646;border-top:1px solid #2a2a2a"></div><div class="a nc" style="left:210px;top:117px;width:399px;height:35px;background:#50acbc;border-left:2px solid #12d012;text-align:center;line-height:36px;font-size:15px;font-weight:bold;letter-spacing:.32px;color:#d6b60a;white-space:nowrap">PActionPlayAnim <b>播放动画</b></div><div class="a" style="left:4px;top:152px;width:194px;height:36px;background:#464646;border-top:1px solid #2a2a2a"></div><div class="t" style="left:4px;top:152px;width:194px;height:36px;line-height:39px;text-align:center;font-size:16px;letter-spacing:.12px;color:#b8b8b8">PActionPlayEffect</div><div class="btn" style="left:9px;top:155px;width:31px;height:30px;line-height:33px;color:#bcbcbc">Del</div><div class="a" style="left:210px;top:152px;width:769px;height:36px;background:#464646;border-top:1px solid #2a2a2a"></div><div class="a nc" style="left:210px;top:153px;width:399px;height:35px;background:#4c7b83;border-left:2px solid #12d012;text-align:center;line-height:36px;font-size:15px;font-weight:bold;letter-spacing:.32px;color:#d8d8d8;white-space:nowrap">PActionPlayEffect <b>播放</b><span class="c">特效</span></div><div class="a" style="left:4px;top:188px;width:194px;height:36px;background:#464646;border-top:1px solid #2a2a2a"></div><div class="t" style="left:4px;top:188px;width:194px;height:36px;line-height:39px;text-align:center;font-size:16px;letter-spacing:.12px;color:#b8b8b8">PActionPlaySound</div><div class="btn" style="left:9px;top:191px;width:31px;height:30px;line-height:33px;color:#bcbcbc">Del</div><div class="a" style="left:210px;top:188px;width:769px;height:36px;background:#464646;border-top:1px solid #2a2a2a"></div><div class="a nc" style="left:210px;top:189px;width:399px;height:35px;background:#4c7b83;border-left:2px solid #12d012;text-align:center;line-height:36px;font-size:15px;font-weight:bold;letter-spacing:.32px;color:#d8d8d8;white-space:nowrap">PActionPlaySound <b>播放</b><span class="c">音效</span></div><div class="a" style="left:609px;top:87px;width:2px;height:200px;background:#dcdcdc"></div><div class="a" style="left:979px;top:116px;width:13px;height:200px;background:#2b2b2b"></div><svg style="left:982px;top:122px" width="8" height="5" viewBox="0 0 8 5"><path d="M0 5 4 0l4 5z" fill="#c0c0c0"/></svg><div class="a" style="left:981px;top:133px;width:10px;height:200px;background:#484848;border-radius:5px"></div></div></body></html>
